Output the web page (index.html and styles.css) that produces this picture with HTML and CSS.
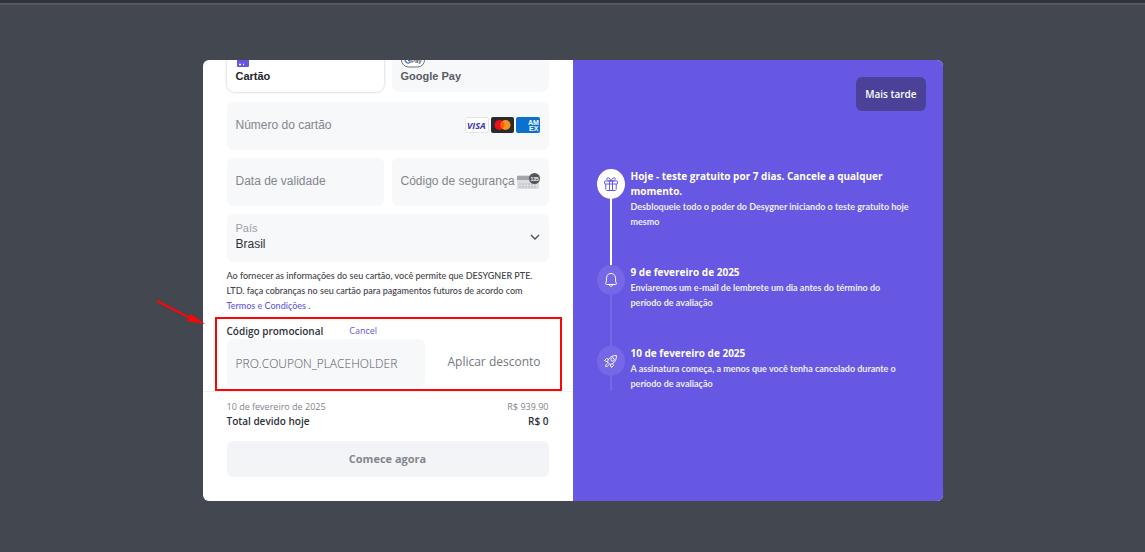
FILE: index.html
```html
<!DOCTYPE html>
<html lang="pt-BR">
  <head>
    <meta charset="UTF-8" />
    <meta name="viewport" content="width=device-width, initial-scale=1.0" />
    <title>Desygner Pro</title>
    <link rel="stylesheet" href="styles.css">
  </head>
  <body>
    <div class="topbar"></div>
    <main class="modal">
      <form class="payment">
        <div class="payment-body">
          <div class="row methods">
            <button type="button" class="method active">
              <svg width="14" height="16" viewBox="0 0 14 16">
                <rect x="1" y="0" width="12" height="15" rx="1" fill="#6557e0" />
                <path d="M3 12.500h2M7 12.500h1" stroke="#fff" stroke-width="1.500" />
              </svg>
              <span>Cartão</span>
            </button>
            <button type="button" class="method">
              <svg width="24" height="16" viewBox="0 0 24 16">
                <rect x="0.500" y="1" width="23" height="14" rx="7" fill="#fff" stroke="#6b6e75" />
                <path d="M9 5.500A3 3 0 1 0 9 10.500V8.500H7" fill="none" stroke="#5577b8" stroke-width="1.300" />
                <text x="10" y="11" class="pay-text">Pay</text>
              </svg>
              <span>Google Pay</span>
            </button>
          </div>

          <div class="field">
            <input type="text" id="card" placeholder="Número do cartão" aria-label="Número do cartão" />
            <svg width="76" height="16" viewBox="0 0 76 16">
              <rect x="0.500" y="0.500" width="23" height="15" rx="2" fill="#fff" stroke="#e3e4ea" />
              <text x="2" y="11.500" class="visa-text">VISA</text>
              <rect x="26" width="23" height="16" rx="2" fill="#2d2a2b" />
              <circle cx="34.500" cy="8" r="5" fill="#eb1020" />
              <circle cx="40.500" cy="8" r="5" fill="#f79420" />
              <path d="M37.500 4a5 5 0 0 1 0 8a5 5 0 0 1 0-8z" fill="#ff5f00" />
              <rect x="51" width="24" height="16" rx="2" fill="#0b70ce" />
              <text x="63" y="8" class="amex-text">AM</text>
              <text x="64" y="14" class="amex-text">EX</text>
            </svg>
          </div>

          <div class="row">
            <div class="field">
              <input type="text" id="expiry" placeholder="Data de validade" aria-label="Data de validade" />
            </div>
            <div class="field">
              <input type="text" id="cvc" placeholder="Código de segurança" aria-label="Código de segurança" />
              <svg width="24" height="18" viewBox="0 0 24 18">
                <rect x="0" y="3" width="22" height="14" rx="1" fill="#dcdde0" />
                <rect x="0" y="4" width="15" height="4" fill="#a3a4a8" />
                <path d="M2 12h18M2 15h18" stroke="#b2b3b8" stroke-dasharray="2 1" />
                <circle cx="17.500" cy="6.500" r="5.500" fill="#55565a" />
                <text x="13.500" y="9" class="cvc-text">135</text>
              </svg>
            </div>
          </div>

          <div class="field country">
            <div>
              <label for="country">País</label>
              <select id="country">
                <option>Brasil</option>
              </select>
            </div>
            <svg width="12" height="8" viewBox="0 0 12 8">
              <path d="M2 2l4 4 4-4" fill="none" stroke="#4a4c52" stroke-width="1.300" />
            </svg>
          </div>

          <p class="terms">
            Ao fornecer as informações do seu cartão, você permite que DESYGNER PTE. LTD. faça cobranças no seu cartão para pagamentos futuros de acordo com <a href="#">Termos e Condições</a> .
          </p>

          <div class="promo-head">
            <label for="coupon">Código promocional</label>
            <a href="#">Cancel</a>
          </div>
          <div class="promo">
            <input type="text" id="coupon" placeholder="PRO.COUPON_PLACEHOLDER" />
            <button type="button">Aplicar desconto</button>
          </div>
        </div>

        <div class="summary">
          <div class="line muted"><span>10 de fevereiro de 2025</span><span>R$ 939.90</span></div>
          <div class="line total"><span>Total devido hoje</span><span>R$ 0</span></div>
          <button type="submit">Comece agora</button>
        </div>
      </form>

      <section class="trial">
        <button type="button" class="later">Mais tarde</button>
        <ol class="timeline">
          <li class="current">
            <div class="marker">
              <svg width="16" height="16" viewBox="0 0 16 16">
                <rect x="1.500" y="5" width="13" height="3" rx="0.500" />
                <path d="M2.800 8v5.500a1 1 0 0 0 1 1h8.400a1 1 0 0 0 1-1V8M6.500 5v9.500M9.500 5v9.500M8 5C5 5 3.500 4 3.800 2.500S7 1.500 8 5M8 5c3 0 4.500-1 4.200-2.500S9 1.500 8 5" />
              </svg>
            </div>
            <div>
              <h3>Hoje - teste gratuito por 7 dias. Cancele a qualquer momento.</h3>
              <p>Desbloqueie todo o poder do Desygner iniciando o teste gratuito hoje mesmo</p>
            </div>
          </li>
          <li>
            <div class="marker">
              <svg width="16" height="16" viewBox="0 0 16 16">
                <path d="M3.500 12.500c-.8 0-1.200-.6-.8-1.300C4 9.500 3 7 3.800 4.500 4.500 2.500 6 1.500 8 1.500s3.500 1 4.200 3c.8 2.500-.2 5 1.100 6.700.4.700 0 1.300-.8 1.300zM6.300 12.800c.3 2 3.100 2 3.400 0" />
              </svg>
            </div>
            <div>
              <h3>9 de fevereiro de 2025</h3>
              <p>Enviaremos um e-mail de lembrete um dia antes do término do período de avaliação</p>
            </div>
          </li>
          <li>
            <div class="marker">
              <svg width="16" height="16" viewBox="0 0 16 16">
                <path d="M4.500 9C5.500 5 8.500 2.500 13.500 2.500c0 5-2.500 8-6.500 9zM5.500 6.500L3.500 5.500 1.500 7.500 4.500 9M9.500 10.500L10.500 12.500 8.500 14.500 7 11.500M4.500 10.500c-1.500.5-1.800 1.500-2 3.200 1.700-.2 2.700-.5 3.200-2" />
                <circle cx="9.500" cy="6.500" r="1.700" />
              </svg>
            </div>
            <div>
              <h3>10 de fevereiro de 2025</h3>
              <p>A assinatura começa, a menos que você tenha cancelado durante o período de avaliação</p>
            </div>
          </li>
        </ol>
      </section>

      <!-- callout drawn over the promo code area -->
      <div class="callout"></div>
      <svg class="arrow" width="50" height="26" viewBox="0 0 50 26">
        <path d="M1 1L36 19" stroke="#fb0505" stroke-width="2" />
        <path d="M49 24L31 21 35 14z" fill="#fb0505" />
      </svg>
    </main>
  </body>
</html>
```
FILE: styles.css
```css
* {
  box-sizing: border-box;
  margin: 0;
  padding: 0;
}

body {
  font-family: "Open Sans", sans-serif;
  background: #43474f;
  min-height: 100vh;
  font-size: 9px;
  line-height: 15px;
  color: #2e3138;
}

.topbar {
  height: 5px;
  background: #30333a;
  border-bottom: 2px solid #555860;
}

button,
input,
select {
  font-family: inherit;
  border: none;
  outline: none;
}

button {
  cursor: pointer;
}

a {
  color: #6557e0;
  text-decoration: none;
}

.modal {
  position: relative;
  display: grid;
  grid-template-columns: 1fr 1fr;
  width: 90%;
  max-width: 740px;
  height: 79vh;
  min-height: 441px;
  margin: 55px auto 0;
  border-radius: 6px;
  background: #fff;
}

/* left side */
.payment {
  display: flex;
  flex-direction: column;
  min-height: 0;
}

.payment-body {
  flex: 1;
  min-height: 0;
  overflow: hidden;
  display: flex;
  flex-direction: column;
  justify-content: flex-end;
  padding: 0 24px 4px;
}

.payment-body > * {
  flex-shrink: 0;
}

.row {
  display: grid;
  grid-template-columns: 1fr 1fr;
  gap: 8px;
}

.methods {
  margin-bottom: 2px;
}

.method {
  display: flex;
  flex-direction: column;
  align-items: flex-start;
  height: 54px;
  padding: 14px 9px 8px;
  border-radius: 8px;
  background: #f7f8fa;
  font-family: "Liberation Sans", sans-serif;
  font-size: 11px;
  font-weight: bold;
  line-height: 16px;
  color: #5a5c63;
}

.method svg {
  flex-shrink: 0;
}

.method.active {
  background: #fff;
  color: #24262b;
  box-shadow: 0 0 2px 1px #dde2ea;
}

.field {
  display: flex;
  align-items: center;
  justify-content: space-between;
  height: 48px;
  margin-top: 8px;
  padding: 0 8px 3px 9px;
  border-radius: 6px;
  background: #f7f8fa;
}

.field svg {
  flex-shrink: 0;
}

.field input {
  width: 100%;
  min-width: 0;
  background: transparent;
  font-family: "Liberation Sans", sans-serif;
  font-size: 12px;
}

.field input::placeholder {
  color: #84868d;
}

.visa-text {
  font: italic bold 9px "Open Sans", sans-serif;
  fill: #3b35b5;
}

.amex-text {
  font: bold 7px "Liberation Sans", sans-serif;
  fill: #fff;
}

.pay-text {
  font: bold 6px "Liberation Sans", sans-serif;
  fill: #5a5c63;
}

.cvc-text {
  font: bold 5px "Liberation Sans", sans-serif;
  fill: #fff;
}

.country {
  font-family: "Liberation Sans", sans-serif;
}

.country label {
  display: block;
  font-size: 11px;
  color: #9a9ca6;
}

.country select {
  display: block;
  appearance: none;
  background: transparent;
  font-size: 12px;
  line-height: 16px;
  color: #2e3138;
}

.terms {
  margin-top: 6px;
  font-family: Lato, "Open Sans", sans-serif;
  font-weight: 500;
  color: #3f4249;
}

.promo-head {
  display: flex;
  gap: 26px;
  margin-top: 10px;
  line-height: 16px;
}

.promo-head label {
  font-size: 10px;
  font-weight: 600;
}

.promo {
  display: flex;
  gap: 8px;
}

.promo input {
  flex: 1;
  min-width: 0;
  height: 48px;
  padding: 0 9px;
  border-radius: 6px;
  background: #f7f8fa;
  font-size: 12px;
  font-weight: 300;
}

.promo input::placeholder {
  color: #55575e;
}

.promo button {
  padding: 0 8px 4px 14px;
  background: transparent;
  font-size: 12px;
  color: #75777e;
}

.summary {
  padding: 7px 24px 24px;
  border-top: 1px solid #eff1f5;
}

.line {
  display: flex;
  justify-content: space-between;
}

.muted {
  color: #81838a;
}

.total {
  font-size: 10px;
  font-weight: 600;
}

.summary button {
  width: 100%;
  height: 36px;
  margin-top: 12px;
  padding-bottom: 2px;
  border-radius: 6px;
  background: #f3f4f7;
  font-size: 11px;
  font-weight: bold;
  color: #83858c;
}

/* right side */
.trial {
  display: flex;
  flex-direction: column;
  padding: 17px 17px 17px 24px;
  border-radius: 0 6px 6px 0;
  background: #6658e2;
  color: #fff;
}

.later {
  align-self: flex-end;
  height: 34px;
  padding: 0 9px;
  border-radius: 6px;
  background: #4b4199;
  font-size: 10px;
  font-weight: 600;
  color: #fff;
}

.timeline {
  list-style: none;
  margin-top: 58px;
}

.timeline li {
  display: flex;
  gap: 6px;
  padding-right: 15px;
}

.timeline li > div:last-child {
  padding-bottom: 36px;
}

.timeline li:last-child > div:last-child {
  padding-bottom: 0;
}

.marker {
  display: flex;
  flex-direction: column;
  align-items: center;
  flex-shrink: 0;
  width: 28px;
}

.marker::after {
  content: "";
  flex: 1;
  width: 2px;
  background: #7568e6;
}

.marker svg {
  width: 28px;
  height: 30px;
  padding: 7px 6px;
  border-radius: 50%;
  background: #7568e6;
  fill: none;
  stroke: #fff;
}

.current .marker svg {
  background: #fff;
  stroke: #6658e2;
}

.current .marker::after {
  background: #fff;
}

.timeline h3 {
  font-size: 10px;
  font-weight: bold;
}

.timeline p {
  font-family: Lato, "Open Sans", sans-serif;
  font-weight: bold;
  color: #efedff;
}

/* callout */
.callout {
  position: absolute;
  top: 257px;
  left: 12px;
  width: calc(50% - 23px);
  height: 74px;
  border: 2px solid #fb0505;
}

.arrow {
  position: absolute;
  top: 240px;
  left: -47px;
}
```
